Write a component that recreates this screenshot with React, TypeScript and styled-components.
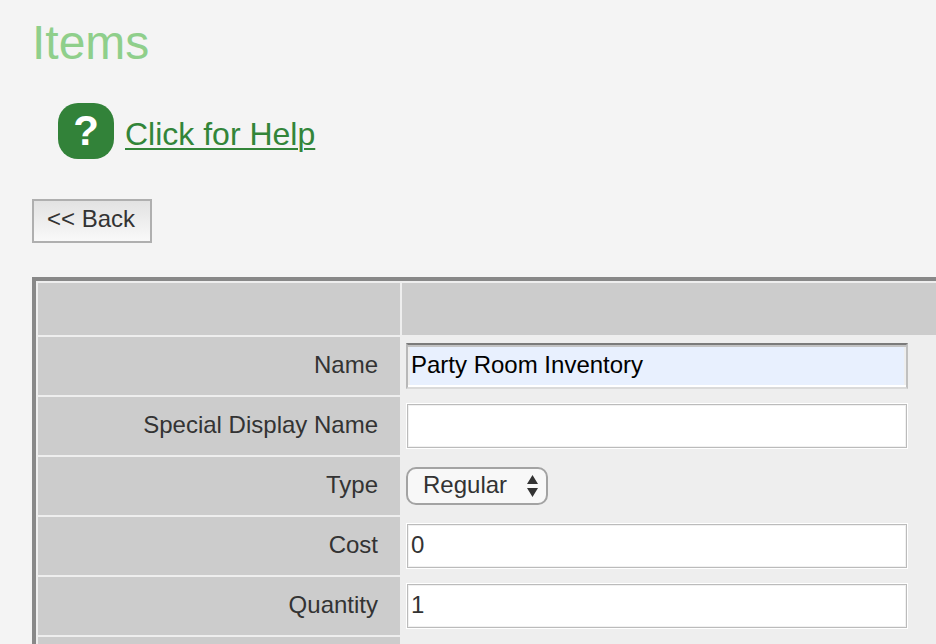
import React from "react";
import styled, { createGlobalStyle, css } from "styled-components";

const GlobalStyle = createGlobalStyle`
  *, *::before, *::after { box-sizing: border-box; }
  body {
    margin: 0;
    background: #f4f4f4;
    color: #333;
    font-family: "Liberation Sans", Arial, sans-serif;
    font-size: 24px;
    line-height: 28px;
  }
`;

const Page = styled.main`
  display: flex;
  flex-direction: column;
  align-items: flex-start;
  height: 100vh;
  overflow: hidden;
  padding: 15px 0 0 32px;
`;

const Title = styled.h1`
  margin: 0;
  color: #8fcf8b;
  font-size: 48px;
  font-weight: 400;
  line-height: 56px;
`;

const HelpLink = styled.a`
  display: flex;
  align-items: center;
  gap: 11px;
  margin: 32px 0 0 26px;
  color: #328539;
  text-decoration: none;
`;

const HelpBadge = styled.span`
  display: flex;
  justify-content: center;
  width: 56px;
  height: 56px;
  border-radius: 20px;
  background: #328239;
  color: #fff;
  font-size: 42px;
  font-weight: 700;
  line-height: 56px;
`;

const HelpText = styled.span`
  padding-top: 6px;
  font-size: 32px;
  line-height: 36px;
  text-decoration: underline;
  text-decoration-thickness: 2px;
  text-underline-offset: 3px;
`;

const BackButton = styled.button`
  flex: none;
  width: 120px;
  height: 44px;
  margin: 40px 0 34px;
  padding: 0 2px 4px 0;
  border: 2px solid #afafaf;
  background: linear-gradient(#e2e2e2, #f9f9f9);
  color: #333;
  font: inherit;
`;

const FormTable = styled.table`
  width: calc(100% + 12px);
  border: solid #888;
  border-width: 4px 0 0 4px;
  border-spacing: 2px;
  background: #eee;
  table-layout: fixed;
`;

const HeaderCell = styled.th<{ $label?: boolean }>`
  width: ${(p) => (p.$label ? "362px" : "auto")};
  height: 52px;
  padding: 0;
  background: #ccc;
`;

const LabelCell = styled.th`
  height: 58px;
  padding: 0 22px 2px 0;
  background: #ccc;
  font-weight: 400;
  text-align: right;
  vertical-align: middle;
`;

const FieldCell = styled.td`
  height: 58px;
  padding: 0 4px;
  vertical-align: middle;
`;

const TextInput = styled.input<{ $filled?: boolean }>`
  display: block;
  width: 502px;
  height: 46px;
  border-radius: 0;
  outline: none;
  font: inherit;
  ${(p) =>
    p.$filled
      ? css`
          padding: 0 3px 3px;
          border: 2px solid;
          border-color: #7b7b7b #c0c0c0 #dadada #b8b8b8;
          background: #e8f0fe;
          box-shadow: inset 0 2px #c3c3c3, inset 0 -2px #fff, inset 2px 0 #eee, inset -2px 0 #eee;
          color: #000;
        `
      : css`
          padding: 0 4px 2px;
          border: 1px solid #fff;
          background: #fff;
          box-shadow: inset 0 0 0 1px #bbb, inset 0 0 0 2px #f1f1f1;
          color: #333;
        `}
`;

const SelectBox = styled.div`
  display: grid;
  align-items: center;
  width: 142px;
  height: 38px;
  > * { grid-area: 1 / 1; }
  > svg { justify-self: end; margin-right: 9px; pointer-events: none; }
`;

const Select = styled.select`
  appearance: none;
  width: 100%;
  height: 38px;
  padding: 0 30px 2px 15px;
  border: 2px solid #a3a3a3;
  border-radius: 10px;
  background: #f8f8f8;
  color: #333;
  font: inherit;
`;

type Field = { id: string; label: string; value?: string; filled?: boolean; options?: string[] };

const fields: Field[] = [
  { id: "name", label: "Name", value: "Party Room Inventory", filled: true },
  { id: "display-name", label: "Special Display Name", value: "" },
  { id: "type", label: "Type", options: ["Regular"] },
  { id: "cost", label: "Cost", value: "0" },
  { id: "quantity", label: "Quantity", value: "1" },
];

function FieldControl({ field }: { field: Field }) {
  if (field.options) {
    return (
      <SelectBox>
        <Select id={field.id}>
          {field.options.map((o) => (
            <option key={o}>{o}</option>
          ))}
        </Select>
        <svg width="13" height="24" viewBox="0 0 13 24" fill="#333" aria-hidden="true">
          <path d="M6.5 1 12 10H1ZM1 14h11l-5.5 9Z" />
        </svg>
      </SelectBox>
    );
  }
  return <TextInput id={field.id} type="text" defaultValue={field.value} $filled={field.filled} />;
}

export default function App() {
  return (
    <>
      <GlobalStyle />
      <Page>
        <Title>Items</Title>
        <HelpLink href="#help">
          <HelpBadge aria-hidden="true">?</HelpBadge>
          <HelpText>Click for Help</HelpText>
        </HelpLink>
        <BackButton type="button">&lt;&lt; Back</BackButton>
        <FormTable>
          <thead>
            <tr>
              <HeaderCell $label />
              <HeaderCell />
            </tr>
          </thead>
          <tbody>
            {fields.map((field) => (
              <tr key={field.id}>
                <LabelCell scope="row">
                  <label htmlFor={field.id}>{field.label}</label>
                </LabelCell>
                <FieldCell>
                  <FieldControl field={field} />
                </FieldCell>
              </tr>
            ))}
            <tr>
              <LabelCell />
              <FieldCell />
            </tr>
          </tbody>
        </FormTable>
      </Page>
    </>
  );
}
